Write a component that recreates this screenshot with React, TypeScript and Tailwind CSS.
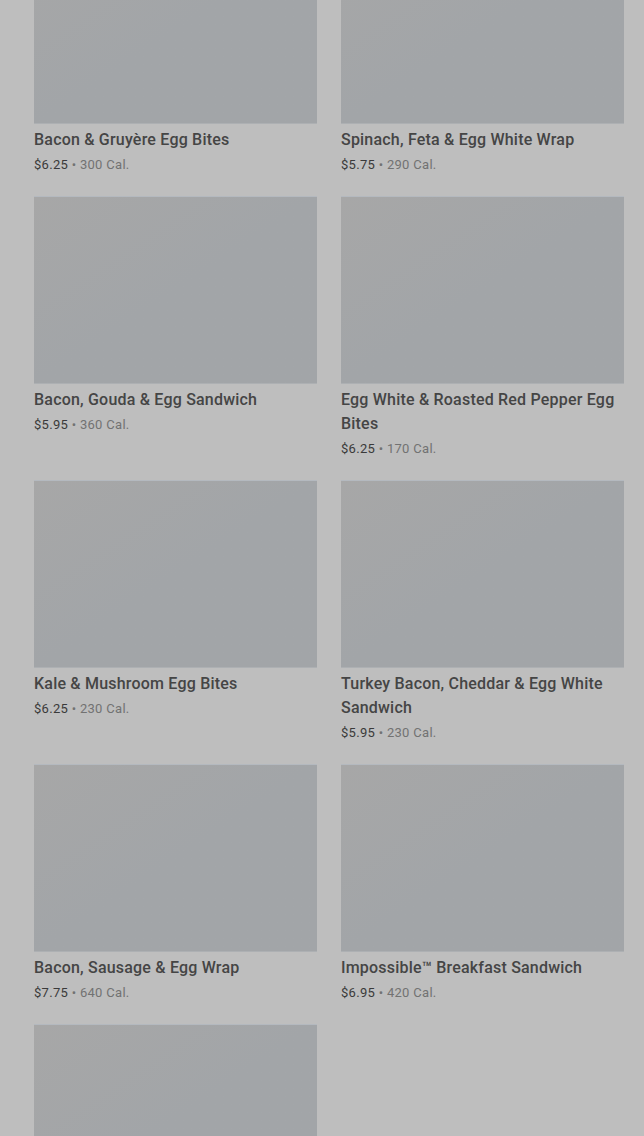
import React from "react";

type Item = { name: string; price: string; cal: number };

const ITEMS: Item[] = [
  { name: "Bacon & Gruyère Egg Bites", price: "$6.25", cal: 300 },
  { name: "Spinach, Feta & Egg White Wrap", price: "$5.75", cal: 290 },
  { name: "Bacon, Gouda & Egg Sandwich", price: "$5.95", cal: 360 },
  { name: "Egg White & Roasted Red Pepper Egg Bites", price: "$6.25", cal: 170 },
  { name: "Kale & Mushroom Egg Bites", price: "$6.25", cal: 230 },
  { name: "Turkey Bacon, Cheddar & Egg White Sandwich", price: "$5.95", cal: 230 },
  { name: "Bacon, Sausage & Egg Wrap", price: "$7.75", cal: 640 },
  { name: "Impossible™ Breakfast Sandwich", price: "$6.95", cal: 420 },
  { name: "Double-Smoked Bacon, Cheddar & Egg Sandwich", price: "$6.45", cal: 500 },
];

function ProductCard({ item }: { item: Item }) {
  return (
    <div className="flex flex-col">
      <div className="h-[188px] w-full border-b border-[#adb0b3] bg-gradient-to-br from-[#a7a7a7] via-[#a2a5a8] to-[#a2a5a8] shadow-[inset_0_1px_0_#b4b9bf]" />
      <div className="mt-1 text-[16px] leading-6 font-medium tracking-[0.2px] text-[#454545]">
        {item.name}
      </div>
      <div className="mt-[3px] text-[13px] leading-5 tracking-[0.3px]">
        <span className="text-[#3a3a3a]">{item.price}</span>
        <span className="text-[#727272]"> • {item.cal} Cal.</span>
      </div>
    </div>
  );
}

export default function App() {
  return (
    <div
      className="h-[1136px] overflow-hidden bg-[#bebebe]"
      style={{ fontFamily: "Roboto, 'Liberation Sans', sans-serif" }}
    >
      <div className="-mt-16 grid grid-cols-2 gap-x-6 gap-y-[21px] pl-[34px] pr-5">
        {ITEMS.map((it) => (
          <ProductCard key={it.name} item={it} />
        ))}
      </div>
    </div>
  );
}
